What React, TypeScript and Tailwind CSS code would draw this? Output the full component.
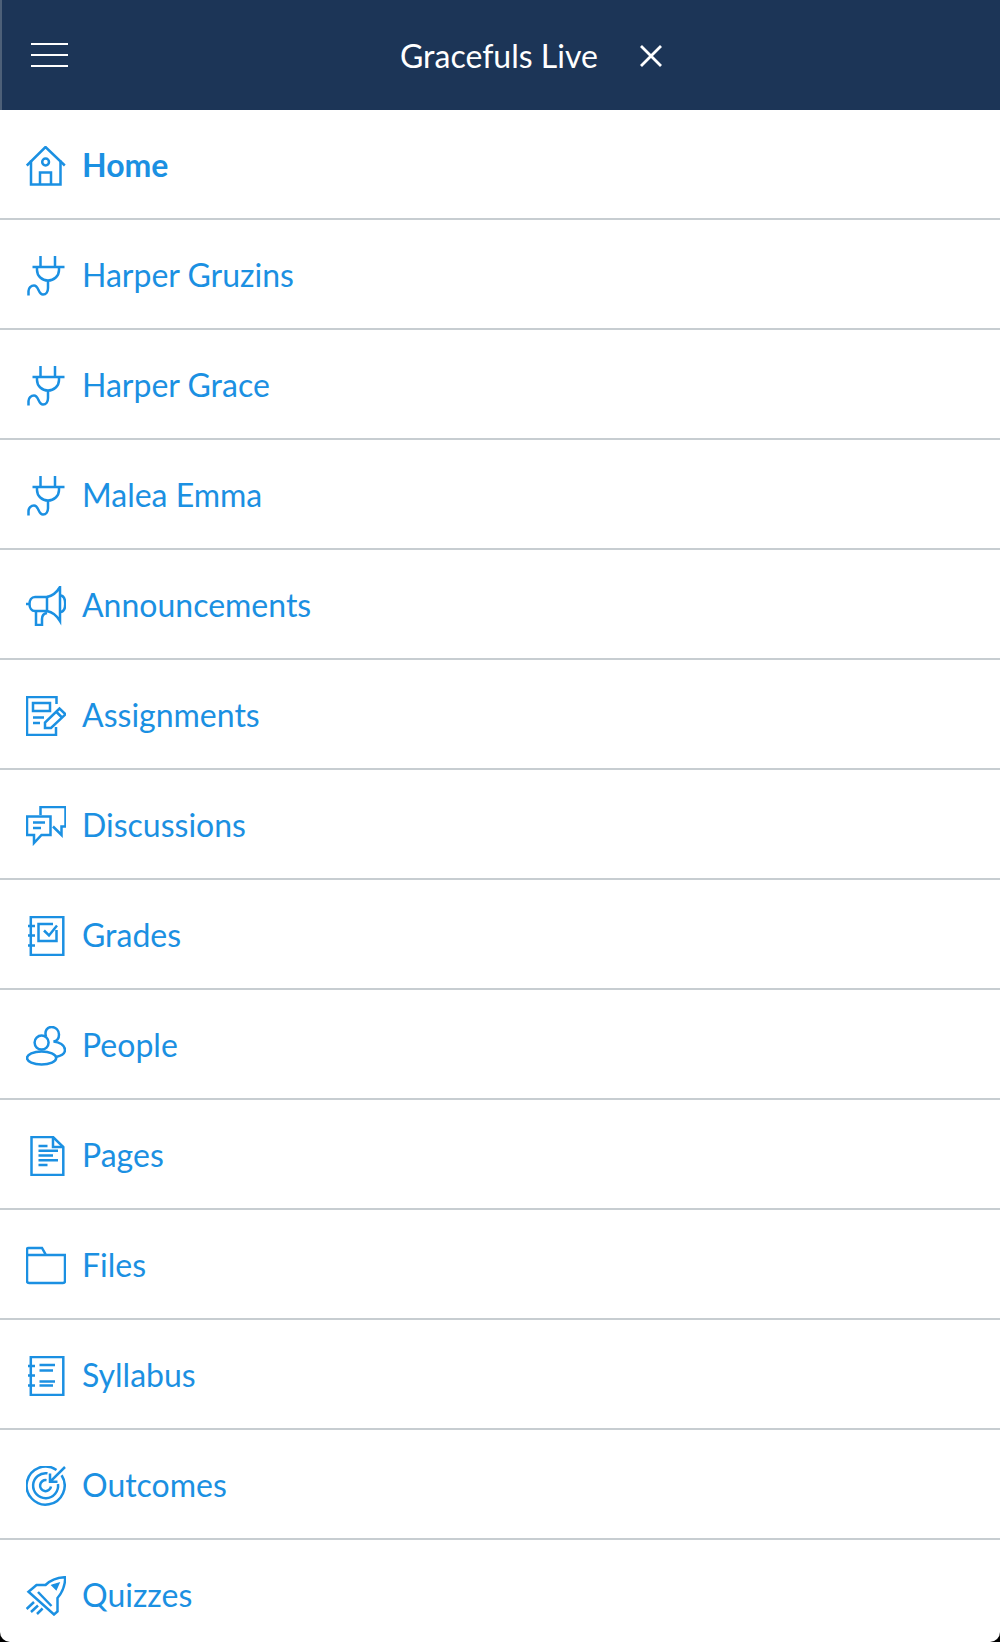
const HomeIcon = () => (
  <>
    <path d="M0.8 19.5 19.5 1 38.8 19.5" />
    <path d="M5 14.5V38.5H34.5V14.5" />
    <path d="M14 38.5V26.5H25V38.5" />
    <circle cx="19.6" cy="16" r="3.4" />
  </>
);

const PlugIcon = () => (
  <>
    <path d="M14.5 0V11M29 0V11M6.5 11H38.5" />
    <path d="M11 11V14C11 20 16 24.5 22 24.5S33 20 33 14V11" />
    <path d="M22 24.5V32C22 36 20 38.5 17 38.5 12 38.5 13 29.5 8 29.5 5 29.5 2.5 32 2.5 35V39.5" />
  </>
);

const MegaphoneIcon = () => (
  <>
    <path d="M21 11H9C5.5 11 3.5 14 3.5 18S5.5 25 9 25H21Z" />
    <path d="M0 18H3.5M21 11C26 10 31 6 34 1V35C31 30 26 26 21 25" />
    <path d="M34 9.5C37.5 9.5 39.2 13 39.2 18S37.5 26 34 26" />
    <path d="M10 25V39H16V33C16 29.5 18 27.5 21 27" />
  </>
);

const AssignmentIcon = () => (
  <>
    <path d="M30.5 8V1H1V39H30V31" />
    <path d="M7 7H24V15H7ZM7 21.5H18M7 27H14" />
    <path d="M19 32V26.5L33.5 12.5 39.5 18.3 25 32ZM30 15.5 36 21.5" />
  </>
);

const DiscussionIcon = () => (
  <>
    <path d="M14.5 9V1H39.5V20.5H35.5V29L27 20.5" />
    <path d="M1 10.5H24.5V29H15.5L8 37V29H1Z" />
    <path d="M7 16.5H19M7 22H15" />
  </>
);

const NotebookFrame = () => (
  <path d="M4.8 1H37.3V39H4.8ZM2 10H9M2 19.5H9M2 29.5H9" />
);

const GradesIcon = () => (
  <>
    <NotebookFrame />
    <path d="M30.5 14V25H12.5V8H27" />
    <path d="M18 14.5 23 19.5 31 9.5" />
  </>
);

const PeopleIcon = () => (
  <>
    <circle cx="15.6" cy="16.6" r="7" />
    <path d="M20 10.5C18.2 4.5 21.5 1 25.6 1 30 1 33 4.5 33 8.5S30.5 15 27.5 15.5C33 16 39 19 39 24 39 27.5 35 30 30 31" />
    <ellipse cx="15.6" cy="32" rx="14.6" ry="6.5" />
  </>
);

const PageIcon = () => (
  <>
    <path d="M5.5 1H27L37.3 11V39H5.5Z" />
    <path d="M27 1V11H37.3" />
    <path d="M12.5 10H21.5M12.5 14.8H32M12.5 19.5H27M12.5 24.3H32M12.5 29H21.5" />
  </>
);

const FolderIcon = () => (
  <path d="M1 9V3.5C1 2.5 1.5 2 2.5 2H16L20 9H39V35C39 36.5 38 37 37 37H3C2 37 1 36.5 1 35V9H20" />
);

const SyllabusIcon = () => (
  <>
    <NotebookFrame />
    <path d="M13.5 9H29M13.5 14.6H27M13.5 25.5H29M13.5 29.6H27" />
  </>
);

const OutcomeIcon = () => (
  <>
    <path d="M30.5 4A19 19 0 1 0 35.6 9.3" />
    <path d="M21.5 7.3A12.5 12.5 0 1 0 32 18" />
    <path d="M20.5 14.2A5.5 5.5 0 1 0 25 20.5" />
    <path d="M39 1 24 15.8M24 7.5V15.8H31.5" />
  </>
);

const RocketIcon = () => (
  <>
    <path d="M39.3 1.2C30 1.5 24 4.5 19.5 9H10.5L2.5 15.8 28 38.5 31.5 35.5V22C36 17 39 11 39.3 1.2Z" />
    <path d="M12 16 25.5 30" />
    <path d="M27 9.5 32 8 30 12.5Z" fill="currentColor" />
    <path d="M0.6 33 8 26M5 36 12 29.5M11 38 16.6 32.5" />
  </>
);

const items = [
  { label: "Home", icon: <HomeIcon />, active: true },
  { label: "Harper Gruzins", icon: <PlugIcon /> },
  { label: "Harper Grace", icon: <PlugIcon /> },
  { label: "Malea Emma", icon: <PlugIcon /> },
  { label: "Announcements", icon: <MegaphoneIcon /> },
  { label: "Assignments", icon: <AssignmentIcon /> },
  { label: "Discussions", icon: <DiscussionIcon /> },
  { label: "Grades", icon: <GradesIcon /> },
  { label: "People", icon: <PeopleIcon /> },
  { label: "Pages", icon: <PageIcon /> },
  { label: "Files", icon: <FolderIcon /> },
  { label: "Syllabus", icon: <SyllabusIcon /> },
  { label: "Outcomes", icon: <OutcomeIcon /> },
  { label: "Quizzes", icon: <RocketIcon /> },
];

export default function App() {
  return (
    <div className="h-[1642px] overflow-hidden bg-black font-['Lato',sans-serif]">
      <div className="h-full overflow-hidden rounded-b-[10px] bg-white">
        {/* Top bar */}
        <header className="flex h-[110px] items-center border-l-2 border-[#4d6078] bg-[#1c3557] text-white">
          <div className="ml-[29px] flex w-[37px] flex-col gap-[9px]">
            <span className="h-[2px] bg-white" />
            <span className="h-[2px] bg-white" />
            <span className="h-[2px] bg-white" />
          </div>
          <span className="ml-[332px] mt-[1px] text-[32px] leading-none">Gracefuls Live</span>
          <svg
            className="ml-[41px] mt-[2px]"
            width="24"
            height="24"
            viewBox="0 0 24 24"
            fill="none"
            stroke="currentColor"
            strokeWidth="2.8"
          >
            <path d="M2 2 22 22M22 2 2 22" />
          </svg>
        </header>

        {/* Course nav */}
        <nav className="flex flex-col text-[#1b90e2]">
          {items.map((item) => (
            <a
              key={item.label}
              className="flex h-[110px] shrink-0 items-center border-b-2 border-[#c7cdd1] pl-[26px]"
            >
              <svg
                className="mt-[3px] shrink-0"
                width="40"
                height="40"
                viewBox="0 0 40 40"
                fill="none"
                stroke="currentColor"
                strokeWidth="2.5"
              >
                {item.icon}
              </svg>
              <span className={`ml-[16px] mt-[1px] text-[32px] leading-none ${item.active ? "font-bold" : ""}`}>
                {item.label}
              </span>
            </a>
          ))}
        </nav>
      </div>
    </div>
  );
}
